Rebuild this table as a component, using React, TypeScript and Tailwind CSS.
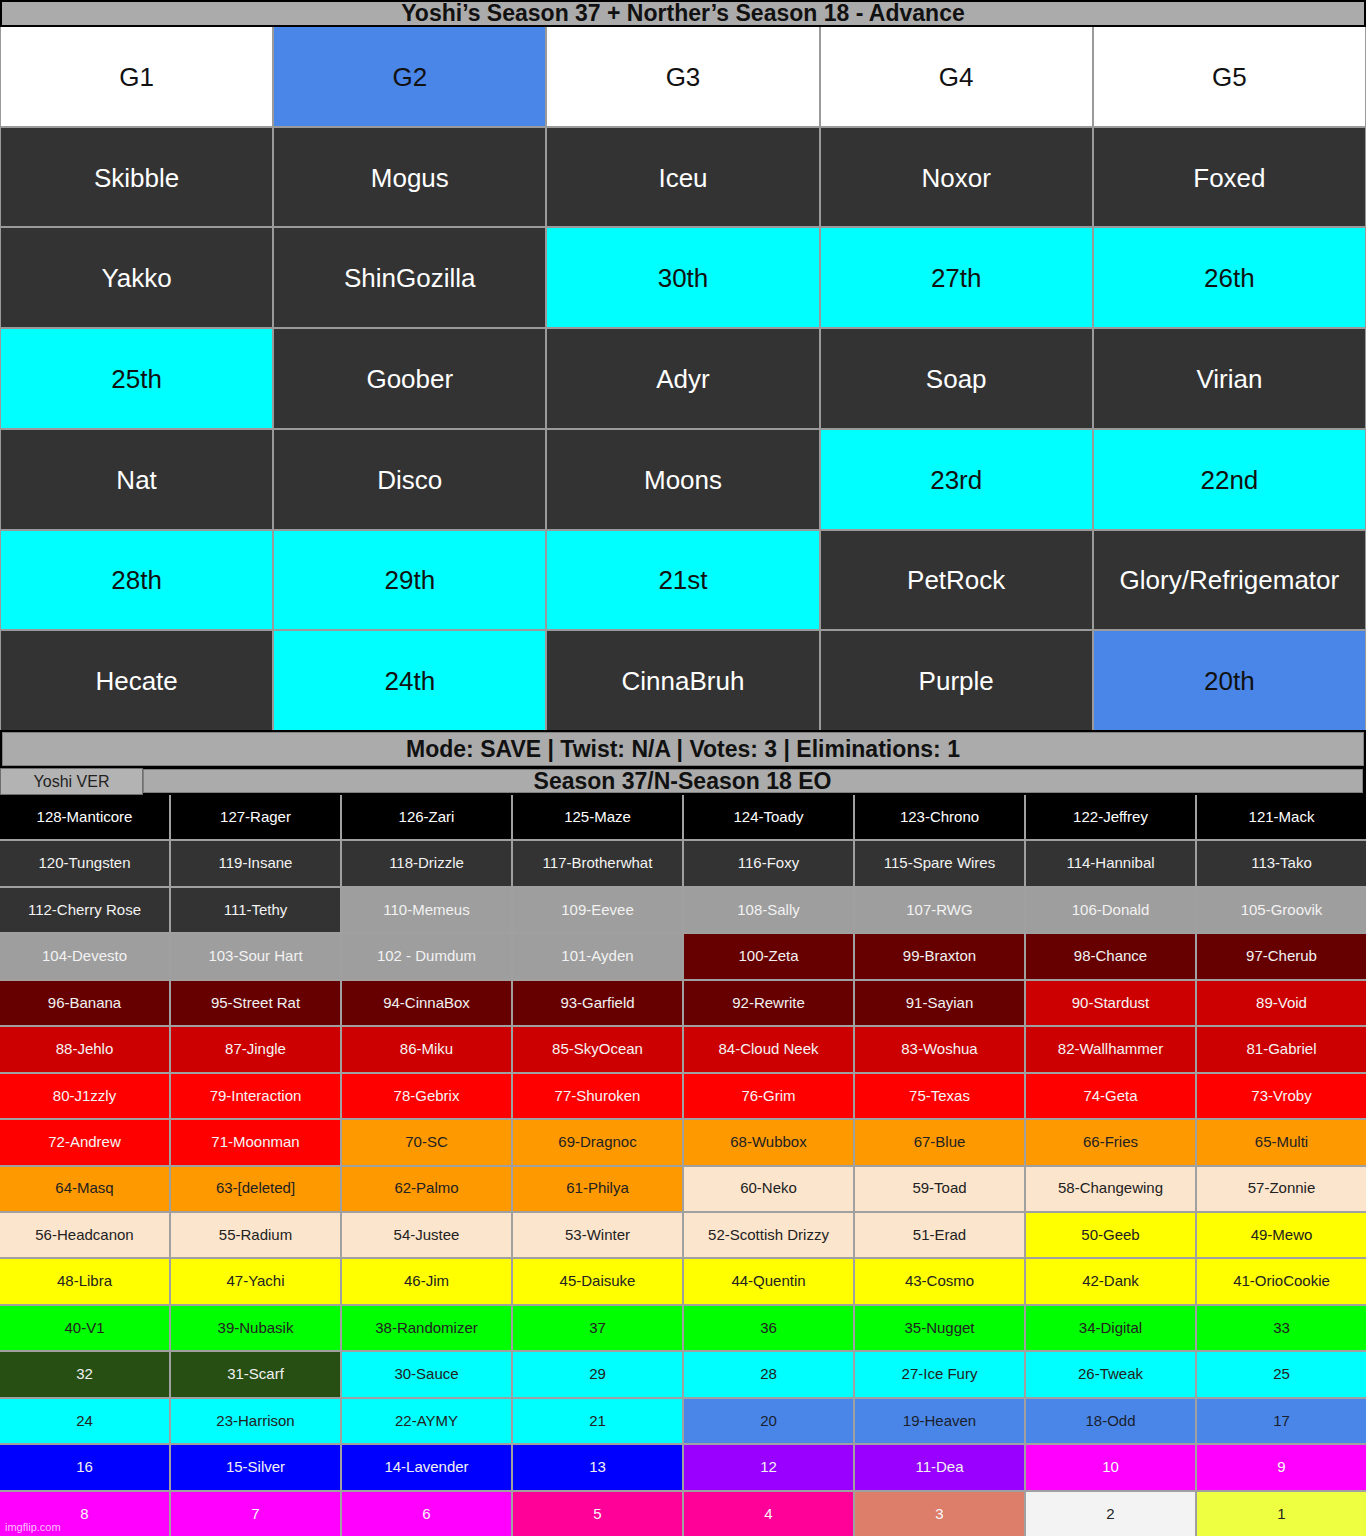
import React from "react";

type Cell = [string, string];

const TOPBG: Record<string, string> = {
  W: "bg-white text-[#111]",
  B: "bg-[#4a86e8] text-[#111]",
  D: "bg-[#333333] text-white",
  C: "bg-[#00ffff] text-[#111]",
};

const topRows: Cell[][] = [
  [["G1", "W"], ["G2", "B"], ["G3", "W"], ["G4", "W"], ["G5", "W"]],
  [["Skibble", "D"], ["Mogus", "D"], ["Iceu", "D"], ["Noxor", "D"], ["Foxed", "D"]],
  [["Yakko", "D"], ["ShinGozilla", "D"], ["30th", "C"], ["27th", "C"], ["26th", "C"]],
  [["25th", "C"], ["Goober", "D"], ["Adyr", "D"], ["Soap", "D"], ["Virian", "D"]],
  [["Nat", "D"], ["Disco", "D"], ["Moons", "D"], ["23rd", "C"], ["22nd", "C"]],
  [["28th", "C"], ["29th", "C"], ["21st", "C"], ["PetRock", "D"], ["Glory/Refrigemator", "D"]],
  [["Hecate", "D"], ["24th", "C"], ["CinnaBruh", "D"], ["Purple", "D"], ["20th", "B"]],
];

const BOTBG: Record<string, string> = {
  K: "bg-black text-white",
  D: "bg-[#333333] text-[#f2f2f2]",
  G: "bg-[#9e9e9e] text-[#f2f2f2]",
  DR: "bg-[#660000] text-[#f2f2f2]",
  R: "bg-[#cc0000] text-[#f5f5f5]",
  BR: "bg-[#ff0000] text-[#f5f5f5]",
  O: "bg-[#ff9900] text-[#222]",
  P: "bg-[#fce5cd] text-[#222]",
  Y: "bg-[#ffff00] text-[#222]",
  GR: "bg-[#00ff00] text-[#222]",
  DG: "bg-[#274e13] text-[#f2f2f2]",
  C: "bg-[#00ffff] text-[#222]",
  B: "bg-[#4a86e8] text-[#1a1f2e]",
  BL: "bg-[#0000ff] text-[#f2f2f2]",
  PU: "bg-[#9900ff] text-[#f2f2f2]",
  M: "bg-[#ff00ff] text-[#f8f8f8]",
  PK: "bg-[#ff0099] text-[#f8f8f8]",
  S: "bg-[#dd7e6b] text-[#f8f8f8]",
  LG: "bg-[#f3f3f3] text-[#222]",
  YG: "bg-[#eeff41] text-[#222]",
};

const r = (names: string[], kinds: string[]): Cell[] => names.map((n, i) => [n, kinds[i]]);
const all = (k: string) => Array(8).fill(k);

const botRows: Cell[][] = [
  r(["128-Manticore", "127-Rager", "126-Zari", "125-Maze", "124-Toady", "123-Chrono", "122-Jeffrey", "121-Mack"], all("K")),
  r(["120-Tungsten", "119-Insane", "118-Drizzle", "117-Brotherwhat", "116-Foxy", "115-Spare Wires", "114-Hannibal", "113-Tako"], all("D")),
  r(["112-Cherry Rose", "111-Tethy", "110-Memeus", "109-Eevee", "108-Sally", "107-RWG", "106-Donald", "105-Groovik"], ["D", "D", "G", "G", "G", "G", "G", "G"]),
  r(["104-Devesto", "103-Sour Hart", "102 - Dumdum", "101-Ayden", "100-Zeta", "99-Braxton", "98-Chance", "97-Cherub"], ["G", "G", "G", "G", "DR", "DR", "DR", "DR"]),
  r(["96-Banana", "95-Street Rat", "94-CinnaBox", "93-Garfield", "92-Rewrite", "91-Sayian", "90-Stardust", "89-Void"], ["DR", "DR", "DR", "DR", "DR", "DR", "R", "R"]),
  r(["88-Jehlo", "87-Jingle", "86-Miku", "85-SkyOcean", "84-Cloud Neek", "83-Woshua", "82-Wallhammer", "81-Gabriel"], all("R")),
  r(["80-J1zzly", "79-Interaction", "78-Gebrix", "77-Shuroken", "76-Grim", "75-Texas", "74-Geta", "73-Vroby"], all("BR")),
  r(["72-Andrew", "71-Moonman", "70-SC", "69-Dragnoc", "68-Wubbox", "67-Blue", "66-Fries", "65-Multi"], ["BR", "BR", "O", "O", "O", "O", "O", "O"]),
  r(["64-Masq", "63-[deleted]", "62-Palmo", "61-Philya", "60-Neko", "59-Toad", "58-Changewing", "57-Zonnie"], ["O", "O", "O", "O", "P", "P", "P", "P"]),
  r(["56-Headcanon", "55-Radium", "54-Justee", "53-Winter", "52-Scottish Drizzy", "51-Erad", "50-Geeb", "49-Mewo"], ["P", "P", "P", "P", "P", "P", "Y", "Y"]),
  r(["48-Libra", "47-Yachi", "46-Jim", "45-Daisuke", "44-Quentin", "43-Cosmo", "42-Dank", "41-OrioCookie"], all("Y")),
  r(["40-V1", "39-Nubasik", "38-Randomizer", "37", "36", "35-Nugget", "34-Digital", "33"], all("GR")),
  r(["32", "31-Scarf", "30-Sauce", "29", "28", "27-Ice Fury", "26-Tweak", "25"], ["DG", "DG", "C", "C", "C", "C", "C", "C"]),
  r(["24", "23-Harrison", "22-AYMY", "21", "20", "19-Heaven", "18-Odd", "17"], ["C", "C", "C", "C", "B", "B", "B", "B"]),
  r(["16", "15-Silver", "14-Lavender", "13", "12", "11-Dea", "10", "9"], ["BL", "BL", "BL", "BL", "PU", "PU", "M", "M"]),
  r(["8", "7", "6", "5", "4", "3", "2", "1"], ["M", "M", "M", "PK", "PK", "S", "LG", "YG"]),
];

export default function App() {
  return (
    <div
      className="relative w-[1366px] h-[1536px] bg-black overflow-hidden"
      style={{ fontFamily: '"Liberation Sans", Arial, sans-serif' }}
    >
      {/* Title */}
      <div className="h-[27px] border-2 border-black bg-[#ababab] flex items-center justify-center">
        <span className="text-[23px] font-bold leading-none text-[#111]">
          Yoshi’s Season 37 + Norther’s Season 18 - Advance
        </span>
      </div>

      {/* Top grid */}
      <div className="grid grid-cols-5 grid-rows-7 gap-[2px] h-[703px] bg-[#9a9a9a] px-[1px]">
        {topRows.flat().map(([t, k], i) => (
          <div key={i} className={`flex items-center justify-center pt-[2px] text-[26px] ${TOPBG[k]}`}>
            {t}
          </div>
        ))}
      </div>

      {/* Mode + season header */}
      <div className="h-[65px] bg-black flex flex-col pt-[2px]">
        <div className="mx-[2px] h-[34px] bg-[#ababab] border border-[#808080] flex items-center justify-center">
          <span className="text-[23px] font-bold leading-none text-[#111]">
            Mode: SAVE | Twist: N/A | Votes: 3 | Eliminations: 1
          </span>
        </div>
        <div className="mt-[2px] flex items-start h-[27px]">
          <div className="w-[143px] h-[27px] bg-[#b3b3b3] border border-[#6e6e6e] flex items-center justify-center text-[16px] text-[#222]">
            Yoshi VER
          </div>
          <div className="flex-1 mr-[3px] mt-[1px] h-[24px] bg-[#ababab] border border-[#808080] flex items-center justify-center pr-[141px]">
            <span className="text-[23px] font-bold leading-none text-[#111]">Season 37/N-Season 18 EO</span>
          </div>
        </div>
      </div>

      {/* Bottom grid */}
      <div className="grid grid-cols-8 grid-rows-16 gap-[2px] h-[741px] bg-[#a0a0a0]">
        {botRows.flat().map(([t, k], i) => (
          <div key={i} className={`flex items-center justify-center text-[15px] ${BOTBG[k]}`}>
            {t}
          </div>
        ))}
      </div>

      <div className="absolute left-[5px] bottom-[3px] text-[11px] leading-none text-white/75">imgflip.com</div>
    </div>
  );
}
